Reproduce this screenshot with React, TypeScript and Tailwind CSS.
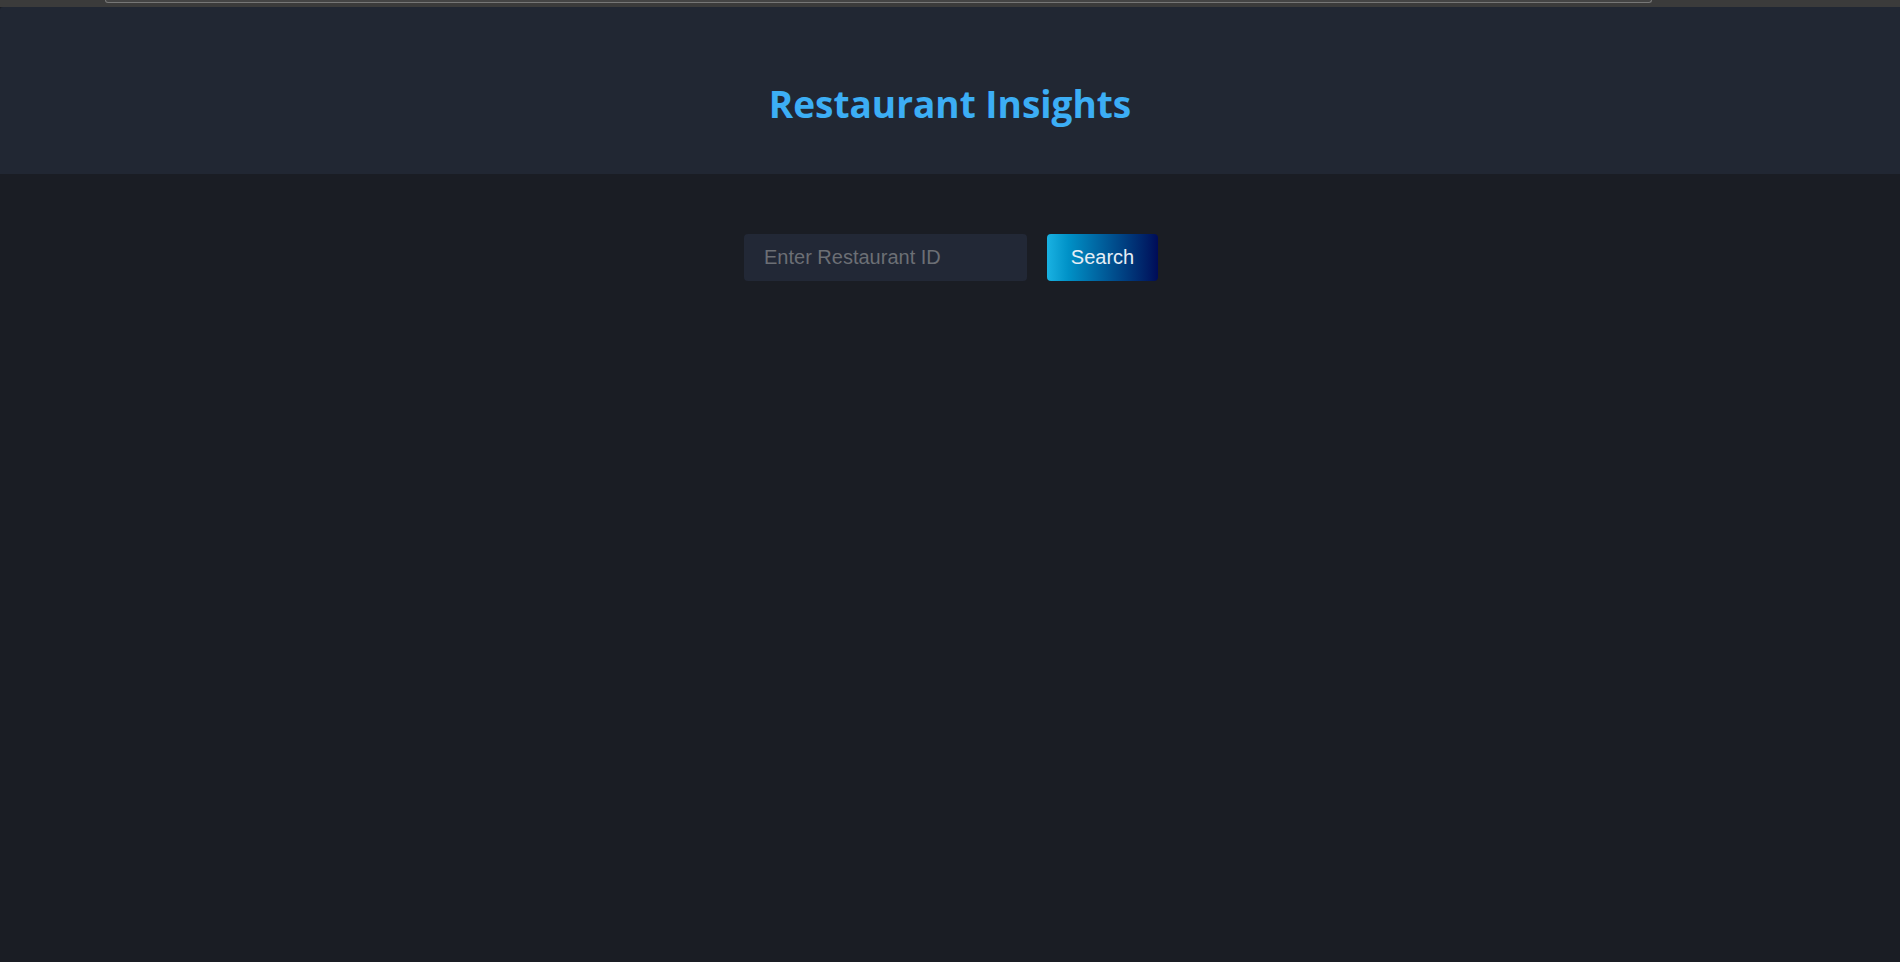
import { useState } from 'react';

export default function App() {
  const [restaurantId, setRestaurantId] = useState('');

  return (
    <div className="min-h-screen bg-[#1a1d24] font-['Liberation_Sans',Arial,sans-serif]">
      {/* Window strip */}
      <div className="h-[7px] bg-[#3b3b3b] pl-[105px] pr-[248px]">
        <div className="h-[3px] rounded-b-[3px] border-b border-x border-[#777] bg-[#444]"></div>
      </div>

      {/* Header */}
      <header className="bg-[#212733] pt-[73px] pb-[46px] rounded-tl-[3px]">
        <h1 className="text-center text-[37px] leading-[48px] font-bold text-[#3caef5] font-['Open_Sans','Noto_Sans',sans-serif]">
          Restaurant Insights
        </h1>
      </header>

      {/* Search */}
      <main className="pt-[60px]">
        <div className="flex justify-center gap-5 pl-[2px]">
          <input
            type="text"
            value={restaurantId}
            onChange={(e) => setRestaurantId(e.target.value)}
            placeholder="Enter Restaurant ID"
            className="w-[283px] h-[47px] px-[20px] rounded bg-[#222836] text-[20px] text-gray-200 placeholder:text-[#6c6f75] outline-none"
          />
          <button className="w-[111px] h-[47px] pb-[2px] rounded bg-gradient-to-r from-[#19b2e2] to-[#000b58] text-[20px] text-[#e6eef6]">
            Search
          </button>
        </div>
      </main>
    </div>
  );
}
